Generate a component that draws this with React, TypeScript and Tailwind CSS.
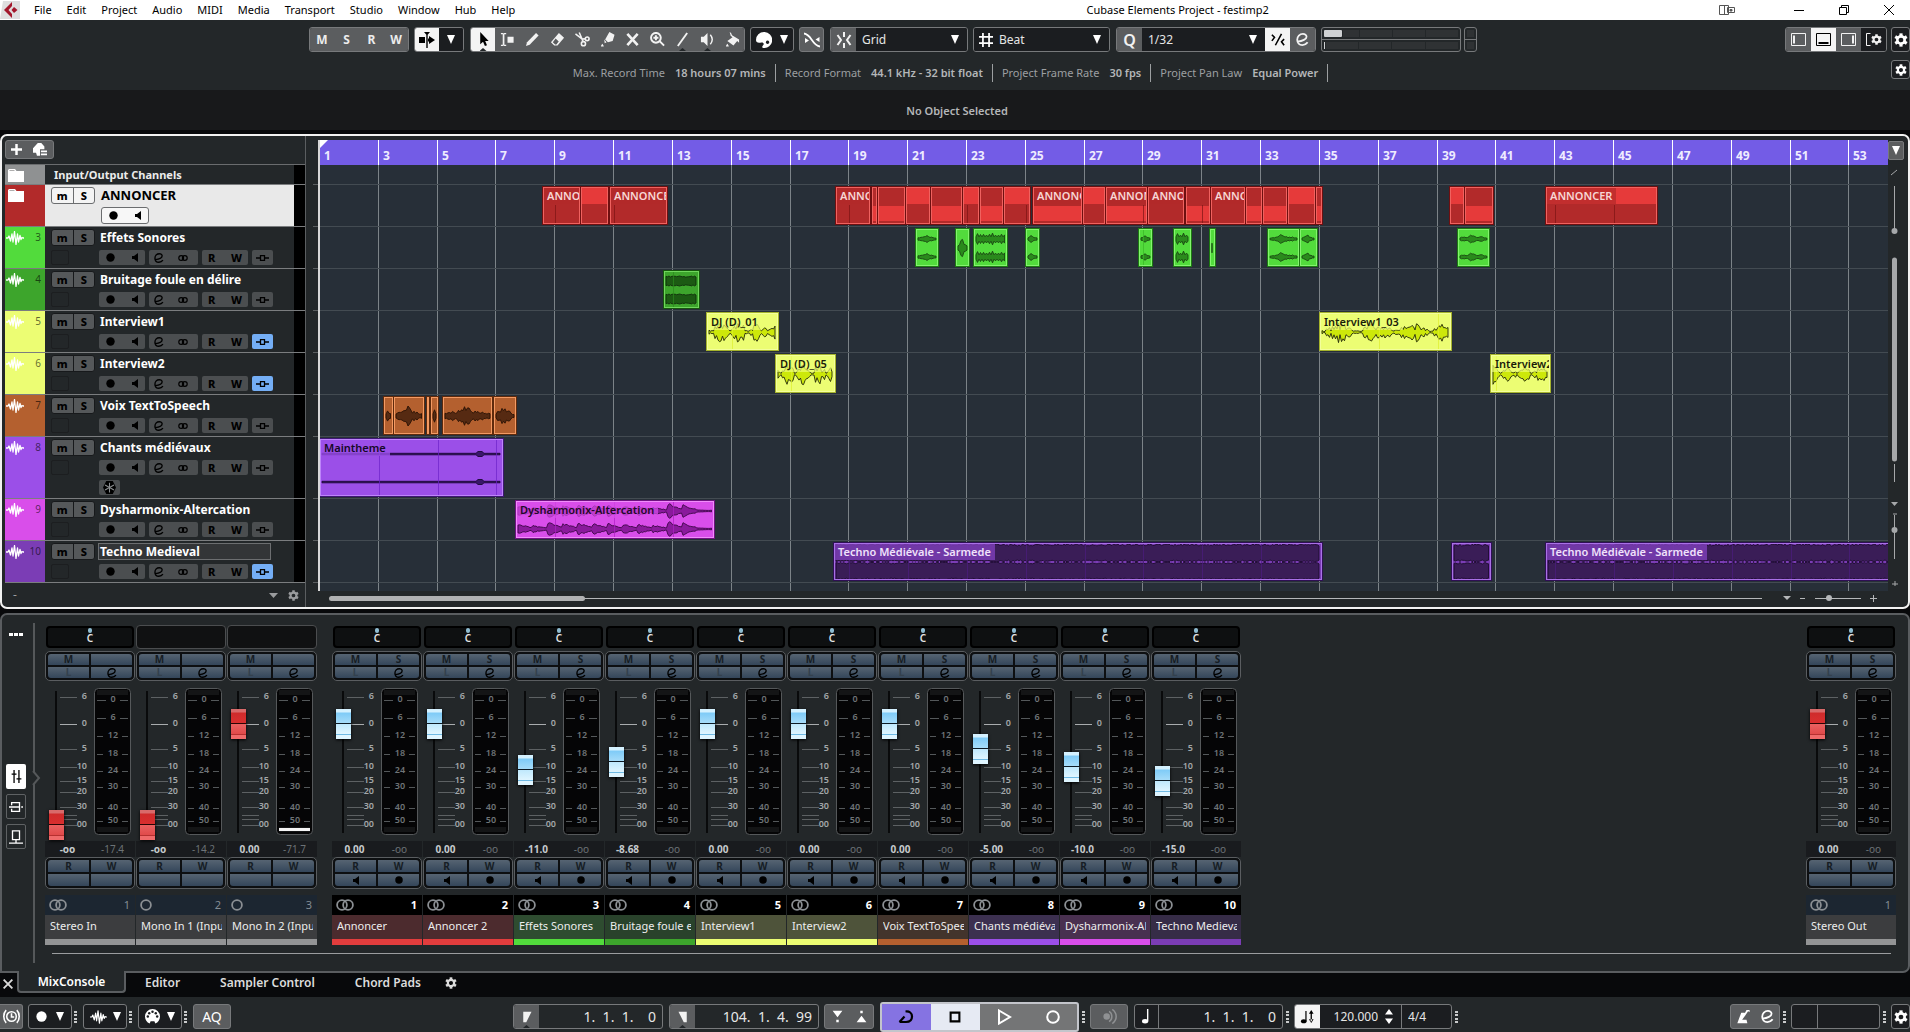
import React from "react";

/* ---------- data ---------- */

type Tone =
  | "red"
  | "green"
  | "darkgreen"
  | "yellow"
  | "orange"
  | "violet"
  | "pink"
  | "purple";

type WaveKind = "blob" | "noise" | "bursts" | "dense" | "line" | "voice";

interface Clip {
  x: number;
  w: number;
  label?: string;
  part?: "top" | "bottom" | "none";
  wave?: WaveKind;
  lanes?: number;
}

interface Track {
  id?: number;
  name: string;
  kind: "folder" | "group" | "audio";
  strip: string;
  height: string;
  tone?: Tone;
  monitor?: boolean;
  tall?: boolean;
  editing?: boolean;
  clips: Clip[];
}

// x and w are measured from bar 1 at the current zoom
const tracks: Track[] = [
  { name: "Input/Output Channels", kind: "folder", strip: "bg-[#8f9192]", height: "h-5", clips: [] },
  {
    name: "ANNONCER",
    kind: "group",
    strip: "bg-[#b22a2a]",
    height: "h-[42px]",
    tone: "red",
    clips: [
      { x: 222, w: 39, label: "ANNONCER", part: "none" },
      { x: 260, w: 29, part: "top" },
      { x: 289, w: 59, label: "ANNONCER", part: "none" },
      { x: 515, w: 36, label: "ANNONCER", part: "none" },
      { x: 551, w: 7, part: "bottom" },
      { x: 557, w: 29, part: "bottom" },
      { x: 585, w: 26, part: "top" },
      { x: 610, w: 33, part: "bottom" },
      { x: 642, w: 18, part: "top" },
      { x: 659, w: 25, part: "bottom" },
      { x: 683, w: 28, part: "top" },
      { x: 712, w: 51, label: "ANNONCER", part: "bottom" },
      { x: 762, w: 24, part: "top" },
      { x: 785, w: 43, label: "ANNONCER", part: "bottom" },
      { x: 827, w: 38, label: "ANNONCER", part: "none" },
      { x: 865, w: 26, part: "bottom" },
      { x: 890, w: 36, label: "ANNONCER", part: "none" },
      { x: 925, w: 18, part: "bottom" },
      { x: 942, w: 26, part: "bottom" },
      { x: 967, w: 29, part: "top" },
      { x: 995, w: 8, part: "bottom" },
      { x: 1129, w: 16, part: "top" },
      { x: 1144, w: 30, part: "bottom" },
      { x: 1225, w: 113, label: "ANNONCER", part: "top" },
    ],
  },
  {
    id: 3,
    name: "Effets Sonores",
    kind: "audio",
    strip: "bg-[#52db3c]",
    height: "h-[42px]",
    tone: "green",
    clips: [
      { x: 595, w: 24, wave: "blob", lanes: 2 },
      { x: 635, w: 15, wave: "blob", lanes: 1 },
      { x: 653, w: 35, wave: "noise", lanes: 2 },
      { x: 705, w: 15, wave: "blob", lanes: 2 },
      { x: 818, w: 15, wave: "blob", lanes: 2 },
      { x: 853, w: 19, wave: "noise", lanes: 2 },
      { x: 889, w: 7, wave: "noise", lanes: 1 },
      { x: 947, w: 33, wave: "blob", lanes: 2 },
      { x: 979, w: 19, wave: "blob", lanes: 2 },
      { x: 1137, w: 33, wave: "blob", lanes: 2 },
    ],
  },
  {
    id: 4,
    name: "Bruitage foule en délire",
    kind: "audio",
    strip: "bg-[#3da52c]",
    height: "h-[42px]",
    tone: "darkgreen",
    clips: [{ x: 343, w: 37, wave: "dense", lanes: 2 }],
  },
  {
    id: 5,
    name: "Interview1",
    kind: "audio",
    strip: "bg-[#ecfd73]",
    height: "h-[42px]",
    tone: "yellow",
    monitor: true,
    clips: [
      { x: 386, w: 73, label: "DJ (D)_01", wave: "voice", lanes: 1 },
      { x: 999, w: 133, label: "Interview1_03", wave: "voice", lanes: 1 },
    ],
  },
  {
    id: 6,
    name: "Interview2",
    kind: "audio",
    strip: "bg-[#ecfd73]",
    height: "h-[42px]",
    tone: "yellow",
    monitor: true,
    clips: [
      { x: 455, w: 61, label: "DJ (D)_05", wave: "voice", lanes: 1 },
      { x: 1170, w: 61, label: "Interview2", wave: "voice", lanes: 1 },
    ],
  },
  {
    id: 7,
    name: "Voix TextToSpeech",
    kind: "audio",
    strip: "bg-[#b4602f]",
    height: "h-[42px]",
    tone: "orange",
    clips: [
      { x: 63, w: 11, wave: "blob", lanes: 1 },
      { x: 73, w: 32, wave: "blob", lanes: 1 },
      { x: 106, w: 4 },
      { x: 110, w: 9, wave: "blob", lanes: 1 },
      { x: 122, w: 51, wave: "blob", lanes: 1 },
      { x: 173, w: 24, wave: "blob", lanes: 1 },
    ],
  },
  {
    id: 8,
    name: "Chants médiévaux",
    kind: "audio",
    strip: "bg-[#9b4fe8]",
    height: "h-[62px]",
    tone: "violet",
    tall: true,
    clips: [{ x: -1, w: 185, label: "Maintheme", wave: "line", lanes: 2 }],
  },
  {
    id: 9,
    name: "Dysharmonix-Altercation",
    kind: "audio",
    strip: "bg-[#d94eea]",
    height: "h-[42px]",
    tone: "pink",
    clips: [{ x: 195, w: 200, label: "Dysharmonix-Altercation", wave: "bursts", lanes: 2 }],
  },
  {
    id: 10,
    name: "Techno Medieval",
    kind: "audio",
    strip: "bg-[#7b3db5]",
    height: "h-[42px]",
    tone: "purple",
    monitor: true,
    editing: true,
    clips: [
      { x: 513, w: 490, label: "Techno Médiévale - Sarmede", wave: "dense", lanes: 2 },
      { x: 1131, w: 41, wave: "dense", lanes: 2 },
      { x: 1225, w: 500, label: "Techno Médiévale - Sarmede", wave: "dense", lanes: 2 },
    ],
  },
];

const tones: Record<
  Tone,
  { box: string; label: string; fill: string; edge: string; lines: string }
> = {
  red: { box: "border-[#f0625f] bg-[#b22a2a] outline-[#6f0f10]", label: "text-[#f7d6d4] bg-[#b22a2a]/70", fill: "#e63a3a", edge: "#e63a3a", lines: "#7d1414" },
  green: { box: "border-[#84f36f] bg-[#52db3c] outline-[#1d7a12]", label: "text-black", fill: "#2a8a1c", edge: "#1a4712", lines: "#39b826" },
  darkgreen: { box: "border-[#6fd65c] bg-[#3da52c] outline-[#16560d]", label: "text-black", fill: "#1c5a13", edge: "#11300c", lines: "#2a8a1c" },
  yellow: { box: "border-[#f3ff9c] bg-[#ecfd73] outline-[#a5b32c]", label: "text-[#1a1c0a] bg-[#ecfd73]/70", fill: "#cde80a", edge: "#23280a", lines: "#dff02e" },
  orange: { box: "border-[#f49a63] bg-[#b4602f] outline-[#5e2a0c]", label: "text-black", fill: "#562a12", edge: "#2a1205", lines: "#8a4018" },
  violet: { box: "border-[#bd85fa] bg-[#9b4fe8] outline-[#3f1676]", label: "text-[#160828] bg-[#9b4fe8]/80", fill: "#3a176b", edge: "#1a0836", lines: "#6d22c9" },
  pink: { box: "border-[#f08cfa] bg-[#d94eea] outline-[#6f1280]", label: "text-[#230829] bg-[#d94eea]/70", fill: "#8a1a9c", edge: "#3b0745", lines: "#b01fc6" },
  purple: { box: "border-[#a970e6] bg-[#7b3db5] outline-[#2f0f55]", label: "text-[#f0e2fb] bg-[#7b3db5]/85", fill: "#3a1d57", edge: "#1c0b2e", lines: "#4c1c80" },
};

interface Strip {
  num: number;
  name: string;
  db: string;
  peak: string;
  level: number;
  mono?: boolean;
  io?: boolean;
  solo?: boolean;
  pan?: boolean;
  signal?: boolean;
  nameBg: string;
  bar: string;
}

const ioLook = { io: true, nameBg: "bg-[#3c3d3f]", bar: "bg-[#939495]" };

const inputs: Strip[] = [
  { num: 1, name: "Stereo In", db: "-oo", peak: "-17.4", level: 0, pan: true, ...ioLook },
  { num: 2, name: "Mono In 1 (Input 1)", db: "-oo", peak: "-14.2", level: 0, mono: true, ...ioLook },
  { num: 3, name: "Mono In 2 (Input 2)", db: "0.00", peak: "-71.7", level: 101, mono: true, signal: true, ...ioLook },
];

const channels: Strip[] = [
  { num: 1, name: "Annoncer", db: "0.00", peak: "-oo", level: 101, solo: true, pan: true, nameBg: "bg-[#4c2b2e]", bar: "bg-[#e23d3d]" },
  { num: 2, name: "Annoncer 2", db: "0.00", peak: "-oo", level: 101, solo: true, pan: true, nameBg: "bg-[#4c2b2e]", bar: "bg-[#e23d3d]" },
  { num: 3, name: "Effets Sonores", db: "-11.0", peak: "-oo", level: 55, solo: true, pan: true, nameBg: "bg-[#2e4c30]", bar: "bg-[#52db3c]" },
  { num: 4, name: "Bruitage foule en délire", db: "-8.68", peak: "-oo", level: 63, solo: true, pan: true, nameBg: "bg-[#29422b]", bar: "bg-[#3da52c]" },
  { num: 5, name: "Interview1", db: "0.00", peak: "-oo", level: 101, solo: true, pan: true, nameBg: "bg-[#4e533a]", bar: "bg-[#ecfd73]" },
  { num: 6, name: "Interview2", db: "0.00", peak: "-oo", level: 101, solo: true, pan: true, nameBg: "bg-[#4e533a]", bar: "bg-[#ecfd73]" },
  { num: 7, name: "Voix TextToSpeech", db: "0.00", peak: "-oo", level: 101, solo: true, pan: true, nameBg: "bg-[#43342c]", bar: "bg-[#b4602f]" },
  { num: 8, name: "Chants médiévaux", db: "-5.00", peak: "-oo", level: 76, solo: true, pan: true, nameBg: "bg-[#3c3050]", bar: "bg-[#9b4fe8]" },
  { num: 9, name: "Dysharmonix-Altercation", db: "-10.0", peak: "-oo", level: 58, solo: true, pan: true, nameBg: "bg-[#493050]", bar: "bg-[#d94eea]" },
  { num: 10, name: "Techno Medieval", db: "-15.0", peak: "-oo", level: 44, solo: true, pan: true, nameBg: "bg-[#362c47]", bar: "bg-[#7b3db5]" },
];

const output: Strip = { num: 1, name: "Stereo Out", db: "0.00", peak: "-oo", level: 101, pan: true, solo: true, ...ioLook };

/* ---------- icons ---------- */

interface SvgProps {
  size?: number;
  className?: string;
  children: React.ReactNode;
}

// 16 unit grid, drawn with the current text colour
const Svg = ({ size = 16, className, children }: SvgProps) => (
  <svg width={size} height={size} viewBox="0 0 16 16" fill="currentColor" className={`shrink-0 ${className || ""}`} aria-hidden="true">
    {children}
  </svg>
);

const Down = ({ className }: { className?: string }) => (
  <svg width="8" height="9" viewBox="0 0 8 9" fill="currentColor" className={`shrink-0 ${className || ""}`} aria-hidden="true">
    <path d="M0 0h8L4 9z" />
  </svg>
);

const Gear = ({ size = 14 }: { size?: number }) => (
  <Svg size={size}>
    <circle cx="8" cy="8" r="4.2" fill="none" stroke="currentColor" strokeWidth="3" />
    {[0, 60, 120, 180, 240, 300].map((a) => (
      <rect key={a} x="6.2" y="0.4" width="3.6" height="3.4" transform={`rotate(${a} 8 8)`} />
    ))}
  </Svg>
);

const Dot = ({ size = 9 }: { size?: number }) => (
  <Svg size={size}>
    <circle cx="8" cy="8" r="7.5" />
  </Svg>
);

const Speaker = () => (
  <svg width="6" height="9" viewBox="0 0 6 9" fill="currentColor" aria-hidden="true">
    <path d="M0 3h2l4-3v9L2 6H0z" />
  </svg>
);

const EditMark = ({ size = 10 }: { size?: number }) => (
  <Svg size={size}>
    <path d="M2 10.500C8 10 13 7.500 13 4.500 13 2.300 11 1.200 8.500 1.200 4.500 1.200 1.500 4.300 1.500 8.200c0 3.900 2.500 6.600 6.300 6.600 2.700 0 5-1.200 6.500-3.300" fill="none" stroke="currentColor" strokeWidth="2.200" />
  </Svg>
);

const Rings = ({ mono, className }: { mono?: boolean; className?: string }) => (
  <svg width={mono ? 12 : 18} height="12" viewBox={mono ? "0 0 12 12" : "0 0 18 12"} fill="none" stroke="currentColor" strokeWidth="1.800" className={className} aria-hidden="true">
    <circle cx="6" cy="6" r="4.900" />
    {!mono && <circle cx="12" cy="6" r="4.900" />}
  </svg>
);

const SmallRings = () => (
  <svg width="10" height="8" viewBox="0 0 10 8" fill="none" stroke="currentColor" strokeWidth="1.200" aria-hidden="true">
    <circle cx="3.200" cy="4" r="2.400" />
    <circle cx="6.800" cy="4" r="2.400" />
  </svg>
);

const Insert = () => (
  <svg width="13" height="6" viewBox="0 0 13 6" fill="none" stroke="currentColor" aria-hidden="true">
    <path d="M0 3h4M9 3h4M4.500.500h4v5h-4z" strokeWidth="1.300" />
  </svg>
);

const Waves = ({ size = 18 }: { size?: number }) => (
  <svg width={size} height="14" viewBox="0 0 18 14" fill="none" stroke="currentColor" strokeWidth="1.300" strokeLinejoin="round" aria-hidden="true">
    <path d="M0 7h2l1-2 1.500 5L6 3l1 8L8.500.500 10 13.500 11.500 3l1 8L14 4.500l1 4 1-2 1 .5h1" />
  </svg>
);

const Folder = () => (
  <svg width="16" height="13" viewBox="0 0 16 13" fill="#fff" aria-hidden="true">
    <path d="M1 0h6l1.500 2H16v11H0V1z" />
    <path d="M1.500 1.500h5" stroke="#999" strokeWidth=".8" />
  </svg>
);

const Grip = () => (
  <svg width="3" height="12" viewBox="0 0 3 12" fill="#c9cbcc" className="shrink-0" aria-hidden="true">
    <path d="M0 0h3v2H0zM0 3h3v2H0zM0 7h3v2H0zM0 10h3v2H0z" />
  </svg>
);

const tools: { label: string; icon: React.ReactNode; active?: boolean; menu?: boolean }[] = [
  { label: "Object selection", active: true, menu: true, icon: <path d="M4.500 0v13l3-2.500L9.500 15l2.200-1L9.800 9.500h3.700z" /> },
  { label: "Range selection", icon: <path d="M1 1h2l.8.700L4.600 1h2v1.300H4.700v11.400h1.900V15h-2l-.8-.700L3 15H1v-1.300h1.900V2.300H1zM8 5h6.500v6.500H8z" /> },
  { label: "Draw", icon: <path d="M1 15l1.200-4.200L11.800 1l2.700 2.700L5 13.500z" /> },
  { label: "Erase", icon: <path d="M9.500 1l5.500 5-7 8.500H4.500L1 11zM3 10.800L5.500 13.200h1.300L9.300 10 6 7z" fillRule="evenodd" /> },
  {
    label: "Split",
    icon: (
      <g fill="none" stroke="currentColor" strokeWidth="1.700">
        <path d="M.5 2l7 5.500 3.500-.2M4.500.500L7.500 7.500l1 2.500" />
        <circle cx="13" cy="7.300" r="2" />
        <circle cx="9" cy="12.500" r="2.200" />
      </g>
    ),
  },
  { label: "Glue", icon: <path d="M10 0l5.500 3-2 6.500-5 1.500L5.500 8zM4.500 8L7 11l-2 1zM1 15.500c0-1.500 1.500-3 1.500-3s1.500 1.500 1.500 3z" /> },
  { label: "Mute", icon: <path d="M2.500 2l11 12M13.500 2l-11 12" fill="none" stroke="currentColor" strokeWidth="2.800" /> },
  { label: "Zoom", icon: <path d="M10 9.500l5 5M6.300 3.500v5.400M3.600 6.200H9M6.300 1a5.200 5.200 0 1 1 0 10.400A5.200 5.200 0 0 1 6.300 1z" fill="none" stroke="currentColor" strokeWidth="2.100" /> },
  { label: "Line", menu: true, icon: <path d="M3 15L13 1" fill="none" stroke="currentColor" strokeWidth="2" /> },
  { label: "Play", menu: true, icon: <><path d="M1 5h3l4-4v14l-4-4H1z" /><path d="M11 3c2.500 3 2.500 7 0 10" fill="none" stroke="currentColor" strokeWidth="1.500" /></> },
  { label: "Color", icon: <path d="M5 0l1.500 1 1 2.500L15 8v3.500l-2-2L9 14.500l-6.500-5L8 5.500 6 4zM1 15.500c0-1.500 1.500-3 1.500-3s1.500 1.500 1.500 3z" /> },
];

/* ---------- small controls ---------- */

const group = "flex h-[25px] shrink-0 overflow-hidden rounded-[3px] border border-[#77797b]";
const greyCell = "flex w-[25px] shrink-0 items-center justify-center bg-[#5b5d5f] text-[#f2f2f2]";
const notch = "absolute bottom-0 h-[3px] w-[7px] bg-[#232729] [clip-path:polygon(50%_0,100%_100%,0_100%)]";

const SelectBox = ({ label, value, className }: { label: string; value: string; className: string }) => (
  <div className="relative flex min-w-0 flex-1 items-center bg-[#1b1d20]">
    <select aria-label={label} defaultValue={value} className={`h-full w-full appearance-none text-xs text-[#e6e6e6] outline-none ${className}`}>
      <option>{value}</option>
    </select>
    <Down className="pointer-events-none absolute right-2 text-white" />
  </div>
);

const MenuBar = () => (
  <header className="flex h-5 items-center bg-white pb-px text-[11px] leading-4 text-black">
    <svg width="20" height="18" viewBox="0 0 20 18" aria-hidden="true" className="shrink-0">
      <path d="M3 0h17v18H0z" fill="#dedede" />
      <path d="M12 1L4 9l8 8v-4L8.500 9 12 5z" fill="#a3172b" />
      <path d="M14 6l3.500 3-3.500 3-2.500-3z" fill="#a3172b" />
    </svg>
    <nav className="ml-[14px] flex gap-[15px]">
      {["File", "Edit", "Project", "Audio", "MIDI", "Media", "Transport", "Studio", "Window", "Hub", "Help"].map((m) => (
        <a key={m} href="#">{m}</a>
      ))}
    </nav>
    <div className="flex-1 pl-[140px] text-center">
      <h1>Cubase Elements Project - festimp2</h1>
    </div>
    <div className="flex w-[210px] items-center justify-end gap-[35px] pr-4">
      <svg width="16" height="10" viewBox="0 0 16 10" fill="none" stroke="#555" className="mr-[24px]" aria-hidden="true">
        <path d="M.5.500h9v9h-9z" />
        <path d="M5.500.500v9M8.500 2.500h7v5h-7z" />
        <path d="M11 4.500h2v1.500h-2z" fill="#555" />
      </svg>
      <button aria-label="Minimize"><svg width="10" height="10" viewBox="0 0 10 10" stroke="#000"><path d="M0 5.500h10" /></svg></button>
      <button aria-label="Restore"><svg width="10" height="10" viewBox="0 0 10 10" fill="none" stroke="#000"><path d="M.5 2.500h7v7h-7zM2.500 2.500v-2h7v7h-2" /></svg></button>
      <button aria-label="Close"><svg width="10" height="10" viewBox="0 0 10 10" stroke="#000"><path d="M0 0l10 10M10 0L0 10" /></svg></button>
    </div>
  </header>
);

const Toolbar = () => (
  <div className="flex h-10 items-start pl-[309px] pt-[7px]">
    <div className={group}>
      {["M", "S", "R", "W"].map((l) => (
        <button key={l} className="w-[25px] bg-[#5b5d5f] text-xs font-bold text-[#ececec] first:w-6 last:w-6">{l}</button>
      ))}
    </div>
    <div className={`${group} ml-[5px]`}>
      <button aria-label="Auto-scroll" className="flex w-6 items-center justify-center bg-[#f4f4f4] text-black">
        <Svg>
          <path d="M0 5h6v6H0zM7.300 0h1.400v16H7.300zM5 0h6L8 3.500zM10 4v2.500h-1v3h1V12l6-4z" />
        </Svg>
      </button>
      <button aria-label="Auto-scroll settings" className="flex w-6 items-center justify-center bg-[#1b1d20] text-white"><Down /></button>
    </div>
    <div className={`${group} ml-[6px]`}>
      {tools.map((t) => (
        <button
          key={t.label}
          aria-label={t.label}
          className={`relative flex w-[25px] items-center justify-center first:w-6 last:w-6 ${t.active ? "bg-[#f4f4f4] text-black" : "bg-[#5b5d5f] text-[#f2f2f2]"}`}
        >
          <Svg size={15}>{t.icon}</Svg>
          {t.menu && <span className={notch} />}
        </button>
      ))}
    </div>
    <button aria-label="Colors" className={`${group} ml-[5px] w-[44px] items-center justify-center gap-2 bg-[#1b1d20] text-white`}>
      <Svg>
        <path d="M8 0a8 8 0 1 1-1 15.900c-1.500-.4-.5-2 .3-2.900 1.200-1.500-.3-3-2-2.500C2 11.300 0 10.500 0 8a8 8 0 0 1 8-8zm3.500 8.500a1.700 1.700 0 1 0 .1 0z" />
      </Svg>
      <Down />
    </button>
    <button aria-label="Automation follows events" className={`${group} ml-[5px] w-[25px] items-center justify-center bg-[#5b5d5f] text-white`}>
      <Svg>
        <path d="M0 1.500c3.500.5 5.500 3 7.500 6s4.500 6.500 8.500 7" fill="none" stroke="currentColor" strokeWidth="1.800" />
        <path d="M1 6l4 2.500L1 11zM15.500 5l-4 2.500 4 2.500z" />
      </Svg>
    </button>
    <div className={`${group} ml-[6px] w-[138px]`}>
      <button aria-label="Snap" className={greyCell}>
        <Svg><path d="M1.500 3l3.500 5-3.500 5M14.500 3L11 8l3.500 5M8 0v5M8 11v5" fill="none" stroke="currentColor" strokeWidth="2" /></Svg>
      </button>
      <SelectBox label="Snap type" value="Grid" className="pl-[6px]" />
    </div>
    <div className={`${group} ml-[5px] w-[137px]`}>
      <span className="flex w-[19px] items-center justify-end bg-[#1b1d20] text-white">
        <Svg size={14}><path d="M4.500 0v16M11.500 0v16M0 4.500h16M0 11.500h16" stroke="currentColor" strokeWidth="2" /></Svg>
      </span>
      <SelectBox label="Grid type" value="Beat" className="pl-[6px]" />
    </div>
    <div className={`${group} ml-[6px] w-[200px]`}>
      <button aria-label="Quantize" className={`${greyCell} text-base font-semibold`}>Q</button>
      <SelectBox label="Quantize preset" value="1/32" className="pl-[6px]" />
      <button aria-label="Iterative quantize" className="flex w-[25px] items-center justify-center bg-[#f4f4f4] text-black">
        <Svg size={14}><path d="M1 2l3 3-3 4M15 7l-3 3 3 4M12 1L5 14" fill="none" stroke="currentColor" strokeWidth="1.800" /></Svg>
      </button>
      <button aria-label="Open quantize panel" className={greyCell}><EditMark size={13} /></button>
    </div>
    <div className="ml-[5px] grid h-[25px] w-[140px] grid-rows-2 rounded-[3px] border border-[#77797b]">
      <div className="flex gap-px border-b border-[#77797b] p-[2px]">
        <span className="w-[18px] rounded-[1px] bg-[#cfd1d3]" />
        <span className="w-4 bg-[#2f3234]" />
        <span className="flex-1 bg-[#2f3234]" />
        <span className="flex-1 bg-[#2f3234]" />
        <span className="flex-1 bg-[#2f3234]" />
      </div>
      <div className="flex gap-px p-[2px]">
        <span className="w-px bg-[#cfd1d3]" />
        <span className="w-8 bg-[#2f3234]" />
        <span className="flex-1 bg-[#2f3234]" />
        <span className="flex-1 bg-[#2f3234]" />
        <span className="flex-1 bg-[#2f3234]" />
      </div>
    </div>
    <div className="ml-[3px] grid h-[25px] w-[13px] grid-rows-2 rounded-[3px] border border-[#77797b]">
      <span className="border-b border-[#77797b] p-[2px]"><span className="block h-full bg-[#2f3234]" /></span>
      <span className="p-[2px]"><span className="block h-full bg-[#2f3234]" /></span>
    </div>
    <div className={`${group} ml-auto`}>
      <button aria-label="Left zone" className={greyCell}><svg width="15" height="13" fill="none" stroke="currentColor"><path d="M.5.500h14v12H.500z" /><path d="M3 2.500v8" strokeWidth="2" /></svg></button>
      <button aria-label="Lower zone" className="flex w-[25px] items-center justify-center bg-[#f4f4f4] text-black"><svg width="15" height="13" fill="none" stroke="currentColor"><path d="M.5.500h14v12H.500z" /><path d="M2.500 10h10" strokeWidth="2" /></svg></button>
      <button aria-label="Right zone" className={greyCell}><svg width="15" height="13" fill="none" stroke="currentColor"><path d="M.5.500h14v12H.500z" /><path d="M12 2.500v8" strokeWidth="2" /></svg></button>
      <button aria-label="Window layout" className="flex w-[25px] items-center justify-center bg-[#1b1d20] text-[#f2f2f2]"><svg width="5" height="13" fill="none" stroke="currentColor"><path d="M4.500.500H.500v12h4" /></svg><Gear size={11} /></button>
    </div>
    <button aria-label="Toolbar settings" className={`${group} ml-[4px] w-[19px] items-center justify-center bg-[#1b1d20] text-white`}><Gear /></button>
  </div>
);

const infos = [
  ["Max. Record Time", "18 hours 07 mins"],
  ["Record Format", "44.1 kHz - 32 bit float"],
  ["Project Frame Rate", "30 fps"],
  ["Project Pan Law", "Equal Power"],
];

const StatusLine = () => (
  <div className="relative flex h-[30px] items-center justify-center pb-1 pr-[18px] text-[11px] leading-4 text-[#9c9fa1]">
    <dl className="flex">
      {infos.map(([k, v]) => (
        <div key={k} className="flex h-[18px] items-center gap-[10px] border-r border-[#9c9fa1] px-[9px]">
          <dt>{k}</dt>
          <dd className="font-semibold text-[#b4b6b8]">{v}</dd>
        </div>
      ))}
    </dl>
    <button aria-label="Status line settings" className="absolute right-0 top-0 flex h-[19px] w-[19px] items-center justify-center rounded-[3px] border border-[#77797b] bg-[#1b1d20] text-white"><Gear size={12} /></button>
  </div>
);

/* ---------- track list ---------- */

const ctl = "flex h-[15px] items-center rounded-[2px] bg-[#4b4e50] text-black";

const MuteSolo = ({ light }: { light?: boolean }) => (
  <div className={`flex h-[17px] w-[44px] shrink-0 overflow-hidden rounded-[3px] border text-[11px] font-extrabold leading-[15px] text-black ${light ? "border-[#6b6d6f] bg-[#f4f4f4]" : "border-[#17191b] bg-[#55585a]"}`}>
    <button aria-label="Mute" className={`flex-1 border-r ${light ? "border-[#6b6d6f]" : "border-[#17191b]"}`}>m</button>
    <button aria-label="Solo" className="flex-1">S</button>
  </div>
);

const TrackRow = ({ t }: { t: Track }) => (
  <li className={`flex border-b border-[#7b7d7f] ${t.height}`}>
    <div className={`flex w-10 shrink-0 justify-between ${t.strip}`}>
      {t.kind === "audio" ? (
        <>
          <span className="mt-1 h-[14px] pl-px text-white"><Waves /></span>
          <span className="pr-1 pt-[3px] text-[10px] leading-[14px] text-black/60">{t.id}</span>
        </>
      ) : (
        <span className="pl-[3px] pt-1"><Folder /></span>
      )}
    </div>
    {t.kind === "folder" && (
      <p className="flex-1 pl-[9px] text-[11px] font-bold leading-[19px] text-[#ececec]">{t.name}</p>
    )}
    {t.kind === "group" && (
      <div className="flex-1 bg-[#e9e9e9] pl-[6px] pt-[2px]">
        <div className="flex">
          <MuteSolo light />
          <p className="pl-[6px] text-[13px] font-bold leading-[17px] text-black">{t.name}</p>
        </div>
        <div className="ml-[50px] mt-[3px] flex h-[17px] w-[48px] items-center justify-between rounded-[3px] border border-[#6b6d6f] bg-[#f7f7f7] px-[7px] text-black">
          <button aria-label="Record enable"><Dot /></button>
          <button aria-label="Monitor"><Speaker /></button>
        </div>
      </div>
    )}
    {t.kind === "audio" && (
      <div className="flex-1 pl-[6px] pt-[2px]">
        <div className="flex">
          <MuteSolo />
          <p className={`ml-[3px] w-[173px] border pl-px text-xs font-bold leading-[15px] text-white ${t.editing ? "border-[#6c6e70] bg-[#333537]" : "border-transparent"}`}>{t.name}</p>
        </div>
        <div className="mt-1 flex gap-1">
          <span className="h-[15px] w-[18px] rounded-[2px] border border-[#1c1e20]" />
          <div className={`${ctl} ml-[26px] w-[46px] justify-between px-[7px]`}>
            <button aria-label="Record enable"><Dot /></button>
            <button aria-label="Monitor"><Speaker /></button>
          </div>
          <div className={`${ctl} w-[49px] justify-between pl-[5px] pr-[10px]`}>
            <button aria-label="Edit channel"><EditMark /></button>
            <button aria-label="Channel configuration"><SmallRings /></button>
          </div>
          <div className={`${ctl} w-[46px] justify-between px-[6px] text-[11px] font-extrabold leading-[15px]`}>
            <button aria-label="Read automation">R</button>
            <button aria-label="Write automation">W</button>
          </div>
          <button aria-label="Bypass inserts" className={`flex h-[15px] w-[21px] items-center justify-center rounded-[2px] text-black ${t.monitor ? "bg-[#74aef5]" : "bg-[#4b4e50]"}`}><Insert /></button>
        </div>
        {t.tall && (
          <button aria-label="Musical mode" className={`${ctl} ml-[48px] mt-[5px] w-[21px] justify-center`}>
            <Svg size={13}>
              <path d="M4 0h8l4 8-4 8H4L0 8z" />
              <path d="M8 2v12M2.500 5l11 6M13.500 5l-11 6" stroke="#8b8e90" strokeWidth="1.300" />
            </Svg>
          </button>
        )}
      </div>
    )}
    <span className="w-[11px] shrink-0 bg-black" />
  </li>
);

/* ---------- arrangement ---------- */

const bars = Array.from({ length: 27 }, (_, i) => ({ n: i * 2 + 1, x: Math.round(i * 58.82) }));

const noise = (n: number) => {
  const s = Math.sin(n * 12.9898) * 43758.5453;
  return s - Math.floor(s);
};

function envelope(kind: WaveKind, p: number, i: number, seed: number) {
  const r = noise(i + seed * 31);
  switch (kind) {
    case "blob":
      return (0.25 + 0.75 * Math.sin(Math.PI * Math.min(1, p * 1.1)) * (0.7 + 0.3 * Math.cos(p * 14))) * (0.5 + 0.5 * r);
    case "noise":
      return i % 2 ? 0.9 * (0.6 + 0.4 * r) : 0.3;
    case "bursts": {
      const hit = (p * 13) % 1;
      const loud = [0.6, 0.4, 1, 0.7, 0.8, 0.7, 0.7, 0.6, 0.6, 0.5, 1, 0.8, 0.1][Math.floor(p * 13)] || 0.1;
      return (1 - hit * 0.8) * loud * (0.6 + 0.4 * r) + 0.05;
    }
    case "dense":
      return 0.78 + 0.22 * r;
    case "voice":
      return (0.15 + 0.85 * Math.abs(Math.sin(p * 11 + seed))) * (0.15 + 0.85 * r);
    default:
      return p > 0.87 && p < 0.91 ? 1 : 0.3;
  }
}

function wavePath(kind: WaveKind, w: number, mid: number, amp: number, seed: number) {
  const up: string[] = [];
  const down: string[] = [];
  const step = kind === "line" ? 2 : 1.5;
  const count = Math.floor((w - 4) / step);
  for (let i = 0; i <= count; i++) {
    const a = envelope(kind, i / count, i, seed) * amp;
    const x = (2 + i * step).toFixed(1);
    up.push(`${x} ${(mid - a).toFixed(1)}`);
    down.unshift(`${x} ${(mid + a * (kind === "voice" ? 1.2 : 1)).toFixed(1)}`);
  }
  return `M${up.concat(down).join("L")}Z`;
}

function waveAmp(kind: WaveKind, lanes: number) {
  if (kind === "line") return 2.5;
  if (kind === "voice") return 9;
  if (kind === "blob") return lanes === 1 ? 11 : 5;
  if (kind === "bursts") return 8;
  if (kind === "noise") return lanes === 1 ? 16 : 7;
  return 9;
}

const ClipBox = ({ clip, tone, tall }: { clip: Clip; tone: Tone; tall?: boolean }) => {
  const look = tones[tone];
  const h = tall ? 57 : 37;
  const lanes = clip.lanes || 1;
  const mids = lanes === 2 ? (tall ? [15, 43] : [10, 28]) : [19];
  const amp = clip.wave ? waveAmp(clip.wave, lanes) - (tone === "darkgreen" ? 4 : 0) : 0;
  return (
    <div
      className={`absolute top-[2px] overflow-hidden border outline-1 ${tall ? "h-[57px]" : "h-[37px]"} ${look.box}`}
      style={{ left: clip.x + 1, width: clip.w - 2 }}
    >
      <svg width={clip.w} height={h} className="absolute -left-px -top-px" aria-hidden="true">
        {clip.part === "top" && <path d={`M1 1h${clip.w - 4}v16H1z`} fill={look.fill} />}
        {clip.part === "bottom" && <path d={`M1 19h${clip.w - 4}v15H1z`} fill={look.fill} />}
        {clip.wave && mids.map((m) => (
          <path key={m} d={wavePath(clip.wave as WaveKind, clip.w - 2, m, amp, clip.x)} fill={look.fill} stroke={look.edge} strokeWidth=".9" />
        ))}
        {bars
          .filter((b) => b.x > clip.x + 3 && b.x < clip.x + clip.w - 3)
          .map((b) => (
            <path key={b.n} d={`M${b.x - clip.x - 0.5} ${tone === "red" ? 18 : 1}V${h - 1}`} stroke={look.lines} opacity=".7" />
          ))}
      </svg>
      {clip.label && (
        <span className={`relative block w-fit max-w-none whitespace-nowrap pl-[3px] pr-1 text-[11px] font-semibold leading-4 ${look.label}`}>{clip.label}</span>
      )}
    </div>
  );
};

const Arrangement = () => (
  <div className="flex min-w-0 flex-1 flex-col">
    <div className="flex pt-1">
      <div className="flex w-[14px] shrink-0 border-r-2 border-[#d8d8d8]">
        <ul className="ml-[7px] mt-[25px] w-[5px]">
          {tracks.map((t) => (
            <li key={t.name} className={`border-b border-[#5b5e60] ${t.height}`} />
          ))}
        </ul>
      </div>
      <div className="relative min-w-0 flex-1 overflow-hidden bg-[#272f38] pb-2">
        <div className="relative h-[25px] bg-[#735ce6]">
          <svg width="8" height="8" className="absolute left-0 top-0" aria-hidden="true"><path d="M0 0h8L0 8z" fill="#fff" /></svg>
          {bars.map((b) => (
            <span key={b.n} className="absolute top-0 h-full border-l border-white pl-1 pt-2 text-xs font-bold leading-4 text-[#efecff] first-of-type:border-transparent" style={{ left: b.x - 1 }}>{b.n}</span>
          ))}
        </div>
        {bars.slice(1).map((b) => (
          <span key={b.n} className="absolute bottom-0 top-[25px] w-px bg-[#7c8388]" style={{ left: b.x - 1 }} />
        ))}
        {tracks.map((t) => (
          <div key={t.name} className={`relative border-b border-[#434b52] ${t.height}`}>
            {t.clips.map((c) => (
              <ClipBox key={c.x} clip={c} tone={t.tone as Tone} tall={t.tall} />
            ))}
          </div>
        ))}
      </div>
      <div className="flex w-5 shrink-0 flex-col pr-[4px] pt-px text-[#a6a8aa]">
        <button aria-label="Ruler options" className="flex h-[19px] items-center justify-center rounded-[2px] border border-[#77797b] bg-[#5b5d5f] text-white"><Down /></button>
        <svg width="14" height="422" fill="none" stroke="currentColor" className="mt-1" aria-hidden="true">
          <path d="M3 11l6-5" />
          <path d="M6.500 22v44M6.500 300v18M6.500 351v44M4 420h6M7 417v6" />
          <path d="M6.500 96v199" strokeWidth="5" strokeLinecap="round" />
          <circle cx="6.500" cy="67" r="3" fill="currentColor" stroke="none" />
          <circle cx="6.500" cy="366" r="3" fill="currentColor" stroke="none" />
          <path d="M3 338h7l-3.500 4z" fill="currentColor" stroke="none" />
          <path d="M5 350h4" />
        </svg>
      </div>
    </div>
    <div className="flex h-4 items-center pb-[2px] pl-[23px] pr-[31px] text-[#b5b7b9]">
      <div className="flex h-[5px] flex-1 items-center">
        <span className="h-[5px] w-[256px] rounded-full bg-[#b0b1b2]" />
        <span className="h-px flex-1 bg-[#b5b7b9]" />
      </div>
      <svg width="8" height="4" className="ml-[21px]" fill="currentColor" aria-hidden="true"><path d="M0 0h8L4 4z" /></svg>
      <button aria-label="Zoom out" className="ml-[9px]"><svg width="5" height="7" stroke="currentColor"><path d="M0 3.500h5" /></svg></button>
      <input type="range" aria-label="Horizontal zoom" defaultValue={28} className="ml-[10px] mr-[9px] h-[7px] w-[46px] appearance-none bg-[linear-gradient(#b5b7b9,#b5b7b9)] bg-[length:100%_1px] bg-center bg-no-repeat [&::-webkit-slider-thumb]:size-[6px] [&::-webkit-slider-thumb]:appearance-none [&::-webkit-slider-thumb]:rounded-full [&::-webkit-slider-thumb]:bg-[#b5b7b9]" />
      <button aria-label="Zoom in"><svg width="7" height="7" stroke="currentColor"><path d="M0 3.500h7M3.500 0v7" /></svg></button>
    </div>
  </div>
);

const ProjectPanel = () => (
  <section className="flex rounded-[7px] border-2 border-[#f2f2f2] bg-[#232729]">
    <div className="w-[304px] shrink-0 border-r border-[#5b5e60] pl-[3px]">
      <div className="h-[29px] border-b border-[#6a6c6e] pt-1">
        <div className="flex h-[19px] w-[49px] overflow-hidden rounded-[3px] border border-[#77797b] bg-[#5b5d5f] text-white">
          <button aria-label="Add track" className="flex w-[21px] items-center justify-center"><Svg size={11}><path d="M6.200 0h3.600v6.200H16v3.600H9.800V16H6.200V9.800H0V6.200h6.200z" /></Svg></button>
          <button aria-label="Use track preset" className="flex flex-1 items-center justify-center"><Svg size={14}><path d="M5.500 0h4L13 4v3H8v7.500H4.500L3.500 11H0V6zM9 8.500h7v2H9zM9 12h7v2H9z" /></Svg></button>
        </div>
      </div>
      <ul>
        {tracks.map((t) => (
          <TrackRow key={t.name} t={t} />
        ))}
      </ul>
      <div className="flex h-6 items-center justify-between pl-2 pr-1 text-xs text-[#9a9c9e]">
        <span>-</span>
        <span className="flex items-center gap-[10px]">
          <svg width="9" height="5" fill="currentColor" aria-hidden="true"><path d="M0 0h9L4.500 5z" /></svg>
          <button aria-label="Track settings" className="mr-[2px]"><Gear size={11} /></button>
        </span>
      </div>
    </div>
    <Arrangement />
  </section>
);

/* ---------- mixer ---------- */

const block = "grid grid-cols-2 grid-rows-2 gap-[2px] rounded-[5px] border border-[#5a5d60] bg-[#0d0f11] p-[2px] text-[10px] font-bold text-[#161d24]";
const key = "flex min-h-0 items-center justify-center overflow-hidden bg-linear-to-b from-[#566472] to-[#34465a] leading-[11px]";

const faderTicks: [number, string][] = [
  [16, "6"], [43, "0"], [68, "5"], [86, "10"], [100, "15"], [111, "20"], [126, "30"], [134, ""], [138, ""], [144, "00"],
];
const meterTicks: [number, string][] = [
  [19, "0"], [37, "6"], [55, "12"], [73, "18"], [90, "24"], [106, "30"], [127, "40"], [140, "50"],
];

const FaderScale = ({ signal }: { signal?: boolean }) => (
  <svg width="90" height="160" aria-hidden="true">
    <path d="M11 10v142" stroke="#090a0b" strokeWidth="2" />
    {faderTicks.map(([y, l]) => (
      <g key={y}>
        <path d={`M15 ${y + 0.5}h17`} stroke={l === "0" ? "#a9acae" : "#5d6163"} />
        {l && <text x="42" y={y + 2} textAnchor="end" fill="#a3a7aa" className="text-[9px] font-semibold">{l}</text>}
      </g>
    ))}
    <rect x="49.5" y="7.5" width="36" height="146" rx="4" fill="#050506" stroke="#55585a" />
    <path d="M52 9h31v5H52zM52 146h31v5H52z" fill="#141516" />
    {meterTicks.map(([y, l]) => (
      <g key={y}>
        <path d={`M52 ${y + 0.5}h${l.length > 1 ? 6 : 9}M83 ${y + 0.5}h-${l.length > 1 ? 6 : 8}`} stroke="#54585a" />
        <text x="68" y={y + 2} textAnchor="middle" fill="#6f7477" className="text-[9px] font-semibold">{l}</text>
      </g>
    ))}
    {signal && <path d="M52 147h31v3H52z" fill="#f4f4f4" />}
  </svg>
);

const faderBase =
  "absolute left-1 top-px h-[158px] w-[15px] appearance-none bg-transparent [writing-mode:vertical-lr] [direction:rtl] [&::-webkit-slider-thumb]:h-[30px] [&::-webkit-slider-thumb]:w-[15px] [&::-webkit-slider-thumb]:appearance-none [&::-webkit-slider-thumb]:shadow-[0_1px_3px_#000]";
const redCap =
  "[&::-webkit-slider-thumb]:bg-[linear-gradient(#d86a6a_0_3px,#cf2b2b_4px,#d92f2f_14px,#2a0505_14px,#2a0505_15px,#ea6161_15px,#e04a4a_25px,#b53030_25px,#b53030_26px,#ef6a6a_26px)]";
const blueCap =
  "[&::-webkit-slider-thumb]:bg-[linear-gradient(#d4f1ff_0_3px,#7fcbf7_4px,#a6dcf9_14px,#0d1a24_14px,#0d1a24_15px,#bfe8fc_15px,#dff5ff_25px,#6fb9e3_25px,#6fb9e3_26px,#dff5ff_26px)]";

const ChannelStrip = ({ s }: { s: Strip }) => (
  <article className="w-[90px] shrink-0">
    {s.pan ? (
      <div className="mx-px mb-[3px] mt-px flex h-[22px] flex-col items-center rounded-[4px] border-2 border-black bg-[#0e1011]">
        <span className="h-[5px] w-1 shrink-0 rounded-full bg-[#8fbdd2]" />
        <span className="text-[10px] font-semibold leading-[11px] text-[#e4e4e4]">C</span>
      </div>
    ) : (
      <div className="mb-[2px] h-6 rounded-[4px] border border-[#4b4d4f] bg-[#101112]" />
    )}
    <div className={`${block} h-[30px]`}>
      <button className={`${key} rounded-tl-[3px]`}>M</button>
      <button aria-label="Solo" className={`${key} rounded-tr-[3px]`}>{s.solo ? "S" : ""}</button>
      <button aria-label="Listen" className={`${key} rounded-bl-[3px] text-[#34414d]`}>L</button>
      <button aria-label="Edit channel" className={`${key} rounded-br-[3px] text-black`}><EditMark size={10} /></button>
    </div>
    <div className="relative h-40">
      <FaderScale signal={s.signal} />
      <input type="range" min={0} max={128} defaultValue={s.level} aria-label={`${s.name} volume`} className={`${faderBase} ${s.io ? redCap : blueCap}`} />
    </div>
    <div className="grid h-4 grid-cols-2 bg-[#191b1e] text-center text-[10px] leading-4">
      <span className="font-bold text-[#c6cacd]">{s.db}</span>
      <span className="text-[#6c7276]">{s.peak}</span>
    </div>
    <div className={`${block} h-8`}>
      <button className={`${key} rounded-tl-[3px]`}>R</button>
      <button className={`${key} rounded-tr-[3px]`}>W</button>
      <button aria-label="Monitor" className={`${key} rounded-bl-[3px] text-black`}>{!s.io && <Speaker />}</button>
      <button aria-label="Record enable" className={`${key} rounded-br-[3px] text-black`}>{!s.io && <Dot size={8} />}</button>
    </div>
    <div className={`mt-[6px] flex h-5 items-center justify-between pl-1 pr-[5px] text-[11px] ${s.io ? "bg-[#1c2631] text-[#848c93]" : "bg-black font-bold text-white"}`}>
      <Rings mono={s.mono} className="text-[#8b8f93]" />
      <span>{s.num}</span>
    </div>
    <p className={`h-6 pl-[5px] pr-1 text-[11px] leading-[21px] text-[#ededed] ${s.nameBg}`}>
      <span className="block overflow-hidden whitespace-nowrap">{s.name}</span>
    </p>
    <div className={`h-[6px] ${s.bar}`} />
  </article>
);

const sideBtn = "flex h-[25px] w-5 items-center justify-center rounded-[2px]";

const Mixer = () => (
  <section className="flex flex-1 rounded-t-[7px] rounded-br-[7px] border-2 border-[#5a5d60] bg-[#232729]">
    <div className="relative my-2 flex w-[33px] shrink-0 flex-col items-center border-r-2 border-[#55585a] pr-[3px]">
      <svg width="14" height="3" className="mt-[10px]" fill="#fff" aria-hidden="true"><path d="M0 0h4v3H0zM5 0h4v3H5zM10 0h4v3h-4z" /></svg>
      <div className="mt-[128px] flex flex-col gap-[5px]">
        <button aria-label="Show faders" className={`${sideBtn} bg-white text-black`}><Svg size={13}><path d="M5 0v16M11 0v16M2 5h6M8 11h6" stroke="currentColor" strokeWidth="1.600" /></Svg></button>
        <button aria-label="Show inserts" className={`${sideBtn} border border-[#5f6264] text-white`}><Svg size={14}><path d="M0 8h12M3 6V3h9v10H3v-3M14 8h2" fill="none" stroke="currentColor" strokeWidth="1.500" /></Svg></button>
        <button aria-label="Show sends" className={`${sideBtn} border border-[#5f6264] text-white`}><Svg size={14}><path d="M4 1h8v10H4zM8 11v4M0 15h16" fill="none" stroke="currentColor" strokeWidth="1.500" /></Svg></button>
      </div>
      <svg width="9" height="14" viewBox="0 0 9 14" className="absolute -right-[8px] top-[148px]" aria-hidden="true">
        <path d="M1 0l6 7-6 7" fill="#232729" stroke="#55585a" strokeWidth="2" />
      </svg>
    </div>
    <div className="flex min-w-0 flex-1 flex-col pb-[17px] pl-[10px] pr-3 pt-[10px]">
      <div className="flex gap-px">
        {inputs.map((s) => (
          <ChannelStrip key={s.name} s={s} />
        ))}
        <span className="w-[13px] shrink-0" />
        {channels.map((s) => (
          <ChannelStrip key={s.name} s={s} />
        ))}
        <span className="flex-1" />
        <ChannelStrip s={output} />
      </div>
      <div className="ml-[7px] mr-[5px] mt-auto h-px bg-[#9b9d9f]" />
    </div>
  </section>
);

const Tabs = () => (
  <nav className="flex h-6 items-start text-xs font-semibold leading-4 text-[#dcdcdc]">
    <button aria-label="Close lower zone" className="flex h-[22px] w-4 items-center justify-center"><Svg size={10}><path d="M1 1l14 14M15 1L1 15" stroke="currentColor" strokeWidth="3" /></Svg></button>
    <a href="#" className="z-10 ml-px -mt-[2px] h-[22px] w-[109px] rounded-b-[4px] border-2 border-t-0 border-[#5a5d60] bg-[#232729] pt-[3px] text-center text-white">MixConsole</a>
    <a href="#" className="ml-[19px] pt-[2px]">Editor</a>
    <a href="#" className="ml-[40px] pt-[2px]">Sampler Control</a>
    <a href="#" className="ml-[40px] pt-[2px]">Chord Pads</a>
    <button aria-label="Tab settings" className="ml-6 pt-1"><Gear size={12} /></button>
  </nav>
);

/* ---------- transport ---------- */

const field = "h-full min-w-0 bg-transparent text-right text-[14px] text-[#e6e6e6] outline-none";

const Transport = () => (
  <footer className="flex h-[35px] items-center bg-[#232729] pt-1 text-white">
    <button aria-label="Constrain delay compensation" className={`${group} w-[23px] items-center justify-center rounded-l-none border-l-0 bg-[#5b5d5f]`}>
      <Svg size={17}><circle cx="8" cy="8" r="4.500" fill="none" stroke="currentColor" strokeWidth="1.500" /><path d="M8 5v3.500h2.500M3 2C0 5 0 11 3 14M13 2c3 3 3 9 0 12" fill="none" stroke="currentColor" strokeWidth="1.500" /></Svg>
    </button>
    <button aria-label="Audio record mode" className={`${group} ml-[5px] mr-[2px] w-[44px] items-center justify-center gap-[9px] bg-[#1b1d20]`}><Dot size={11} /><Down /></button>
    <Grip />
    <button aria-label="Audio record options" className={`${group} ml-[6px] mr-[2px] w-[44px] items-center justify-center gap-[6px] bg-[#1b1d20]`}><Waves size={17} /><Down /></button>
    <Grip />
    <button aria-label="MIDI record mode" className={`${group} ml-[6px] mr-[2px] w-[44px] items-center justify-center gap-[7px] bg-[#1b1d20]`}>
      <Svg size={15}>
        <path d="M8 0a8 8 0 0 1 8 8c0 3.500-2 6.300-5 7.500L10 13H6l-1 2.500C2 14.300 0 11.500 0 8a8 8 0 0 1 8-8z" />
        <g fill="#1b1d20"><circle cx="3" cy="8" r="1.300" /><circle cx="4.500" cy="4.500" r="1.300" /><circle cx="8" cy="3" r="1.300" /><circle cx="11.500" cy="4.500" r="1.300" /><circle cx="13" cy="8" r="1.300" /></g>
      </Svg>
      <Down />
    </button>
    <Grip />
    <button className={`${group} ml-[6px] mr-[10px] w-[38px] items-center justify-center bg-[#5b5d5f] text-[14px]`}>AQ</button>

    <div className={`${group} ml-auto w-[150px]`}>
      <button aria-label="Go to left locator" className={`${greyCell} relative`}><Svg size={12}><path d="M3 1h11L7 15H3z" /></Svg><span className={notch} /></button>
      <input aria-label="Left locator" defaultValue={"1.  1.  1.    0"} className={`${field} w-full bg-[#1b1d20] pr-[6px]`} />
    </div>
    <div className={`${group} ml-[6px] w-[150px]`}>
      <button aria-label="Go to right locator" className={`${greyCell} relative`}><Svg size={12}><path d="M13 1H2l7 14h4z" /></Svg><span className={notch} /></button>
      <input aria-label="Right locator" defaultValue="104.  1.  4.  99" className={`${field} w-full bg-[#1b1d20] pr-[6px]`} />
    </div>
    <div className={`${group} ml-[5px] w-[50px] bg-[#5b5d5f]`}>
      <button aria-label="Punch in" className="flex flex-1 items-center justify-center"><Svg size={13}><path d="M2 1h12L8 9zM6.500 12h3v3h-3z" /></Svg></button>
      <button aria-label="Punch out" className="flex flex-1 items-center justify-center"><Svg size={13}><path d="M2 15h12L8 7zM6.500 1h3v3h-3z" /></Svg></button>
    </div>
    <div className="ml-[6px] grid h-[30px] w-[199px] shrink-0 grid-cols-4 overflow-hidden rounded-[3px] border-2 border-[#c3c5cb] bg-[#747576]">
      <button aria-label="Cycle" className="flex items-center justify-center bg-[#8573e2] text-black"><Svg size={16}><path d="M7.500 2.500c4-.5 6.500 1.500 6.500 5 0 3.800-2.500 5.500-6 5.500H1.500M1.500 13l5-5.500" fill="none" stroke="currentColor" strokeWidth="2.200" /></Svg></button>
      <button aria-label="Stop" className="flex items-center justify-center bg-[#e6eaf3] text-black"><Svg size={14}><path d="M3 3h10v10H3z" fill="none" stroke="currentColor" strokeWidth="2.400" /></Svg></button>
      <button aria-label="Start" className="flex items-center justify-center"><Svg size={16}><path d="M3 1.500L14 8 3 14.500z" fill="none" stroke="currentColor" strokeWidth="2" /></Svg></button>
      <button aria-label="Record" className="flex items-center justify-center"><Svg size={16}><circle cx="8" cy="8" r="5.800" fill="none" stroke="currentColor" strokeWidth="2" /></Svg></button>
    </div>
    <span className="ml-[3px]"><Grip /></span>
    <button aria-label="Jog" className={`${group} ml-[5px] w-[38px] items-center justify-center bg-[#5b5d5f] text-[#8f9193]`}><Svg size={15}><circle cx="5" cy="8" r="3.500" /><path d="M7.500 2.500c4 2 4 9 0 11M11 .500c5.500 4 5.500 11 0 15" fill="none" stroke="currentColor" strokeWidth="1.600" /></Svg></button>
    <div className={`${group} ml-[6px] w-[149px] bg-[#1b1d20]`}>
      <span className="flex w-6 shrink-0 items-center justify-center border-r border-[#77797b]"><Svg size={15}><ellipse cx="6.500" cy="13" rx="3.300" ry="2.400" /><path d="M8.500 0H10v13H8.500z" /></Svg></span>
      <input aria-label="Primary time display" defaultValue={"1.  1.  1.    0"} className={`${field} w-full pr-[6px]`} />
    </div>
    <span className="ml-[3px]"><Grip /></span>
    <div className={`${group} ml-[5px] w-[158px] bg-[#1b1d20]`}>
      <button aria-label="Tempo track" className="flex w-[25px] shrink-0 items-center justify-center bg-[#f4f4f4] text-black"><Svg size={15}><ellipse cx="4" cy="13" rx="3" ry="2.200" /><path d="M5.700 2H7v11H5.700zM11.300 3h1.400v10h-1.400zM9.500 5L12 1l2.500 4zM9.500 11l2.500 4 2.500-4z" /></Svg></button>
      <input aria-label="Tempo" defaultValue="120.000" className="w-[58px] bg-transparent text-right text-xs text-[#e6e6e6] outline-none" />
      <svg width="8" height="15" viewBox="0 0 8 15" fill="#fff" className="ml-[7px] mr-[8px] self-center" aria-hidden="true"><path d="M0 5.500h8L4 0zM0 9.500h8L4 15z" /></svg>
      <input aria-label="Time signature" defaultValue="4/4" className="min-w-0 flex-1 border-l border-[#77797b] bg-transparent pl-[6px] text-xs text-[#e6e6e6] outline-none" />
    </div>
    <span className="ml-[3px]"><Grip /></span>

    <div className={`${group} ml-auto mr-[3px] w-[50px] bg-[#5b5d5f]`}>
      <button aria-label="Metronome" className="flex flex-1 items-center justify-center"><Svg size={14}><path d="M6 3h4l.8 3L7 11h5l1 4H1.500zM12 0l2 1-4 6-1.500-.5zM12 0h3.500v2.500z" /></Svg></button>
      <button aria-label="Metronome setup" className="flex flex-1 items-center justify-center"><EditMark size={13} /></button>
    </div>
    <Grip />
    <div className={`${group} ml-[5px] mr-[3px] w-[89px] bg-[#1b1d20]`}><span className="w-[26px] border-r border-[#77797b]" /></div>
    <Grip />
    <button aria-label="Transport settings" className={`${group} ml-[5px] w-[19px] items-center justify-center bg-[#1b1d20]`}><Gear /></button>
  </footer>
);

export default function App() {
  return (
    <div className="flex min-h-screen flex-col overflow-hidden bg-[#08090b] font-['Noto_Sans','Open_Sans',sans-serif] text-[#e6e6e6]">
      <MenuBar />
      <div className="bg-[#232729]">
        <Toolbar />
        <StatusLine />
      </div>
      <div className="flex h-10 items-center justify-center bg-[#18191b] pl-1 pt-[2px] text-[11px] font-semibold text-[#b4b6b8]">No Object Selected</div>
      <main className="flex flex-1 flex-col gap-1 pt-1">
        <ProjectPanel />
        <Mixer />
      </main>
      <Tabs />
      <Transport />
    </div>
  );
}
